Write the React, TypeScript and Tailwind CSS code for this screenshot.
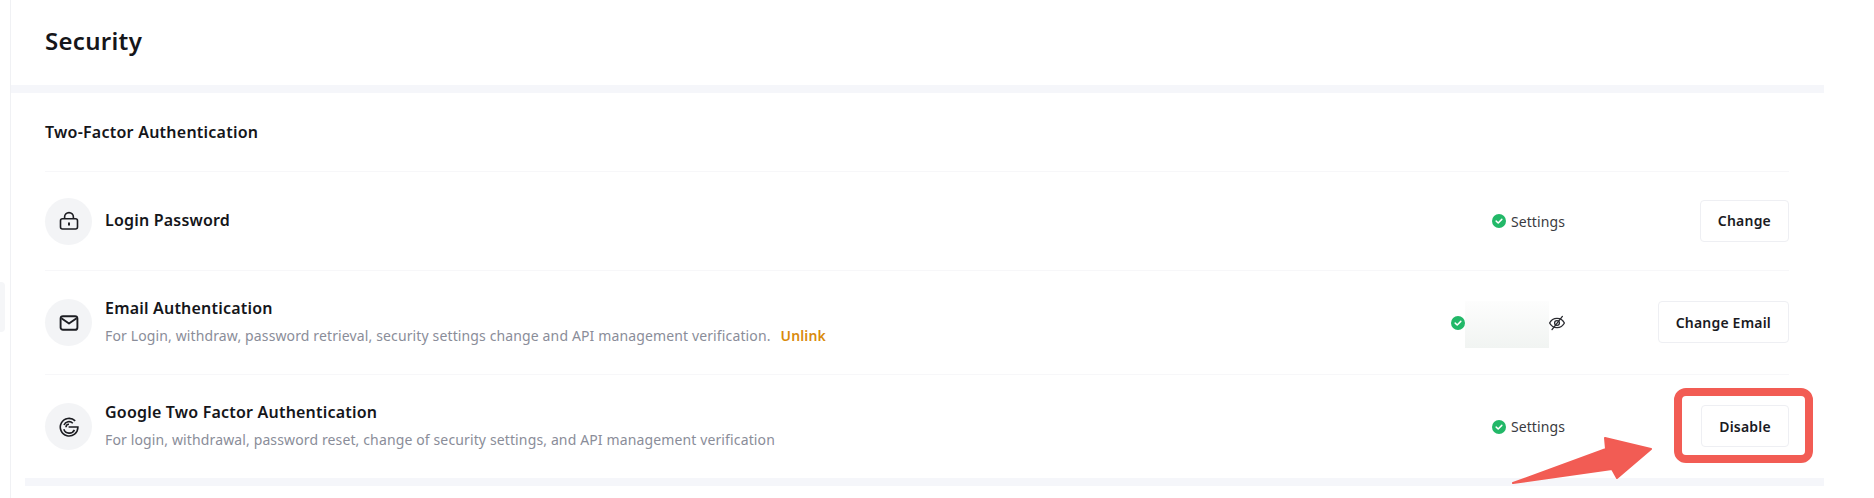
import { ReactNode } from 'react';

function CheckBadge() {
  return (
    <svg width="14" height="14" viewBox="0 0 14 14" className="shrink-0">
      <circle cx="7" cy="7" r="7" fill="#22b868" />
      <path d="M4.2 7.1l2 1.9 3.6-3.6" fill="none" stroke="#fff" strokeWidth="1.5" strokeLinecap="round" strokeLinejoin="round" />
    </svg>
  );
}

function LockIcon() {
  return (
    <svg width="20" height="20" viewBox="0 0 20 20" fill="none" stroke="#1c1d22" strokeWidth="1.6">
      <rect x="1.500" y="7.800" width="17" height="10.200" rx="2" />
      <path d="M5.600 7.800V6a4.400 4.400 0 0 1 8.800 0v1.800" />
      <path d="M10 12.200v1.600" strokeLinecap="round" strokeWidth="2" />
    </svg>
  );
}

function MailIcon() {
  return (
    <svg width="20" height="20" viewBox="0 0 20 20" fill="none" stroke="#1c1d22" strokeWidth="1.900">
      <rect x="1.600" y="3.200" width="16.800" height="13.600" rx="2.400" />
      <path d="M2.400 5.200L10 10.600l7.600-5.400" strokeLinejoin="round" />
    </svg>
  );
}

function GoogleIcon() {
  return (
    <svg width="20" height="20" viewBox="0 0 20 20" fill="none" stroke="#1c1d22" strokeWidth="1.600">
      <path d="M16.200 3.800A8.800 8.800 0 1 0 18.900 10H9.600" />
      <path d="M13.800 6.200A5.400 5.400 0 0 0 5 8" />
      <path d="M4.800 12.200A5.700 5.700 0 0 0 15.400 12.800" />
      <path d="M7 10.200a3 3 0 0 1 3-3" />
    </svg>
  );
}

function EyeSlash() {
  return (
    <svg width="16" height="16" viewBox="0 0 16 16" fill="none" stroke="#2b2c31" strokeWidth="1.300" className="shrink-0">
      <path d="M.6 8c1.600-3.100 4.100-4.600 7.400-4.600s5.800 1.500 7.400 4.600c-1.600 3.100-4.100 4.600-7.400 4.600S2.200 11.100.6 8z" />
      <circle cx="8" cy="8" r="2.400" />
      <path d="M13.400 1.400L3 14.600" strokeLinecap="round" />
    </svg>
  );
}

function Row({ icon, title, desc, status, action, short }: { icon: ReactNode; title: string; desc?: ReactNode; status: ReactNode; action: string; short?: boolean }) {
  return (
    <div className={short ? 'flex h-[99px] items-center border-t border-[#f7f7f9]' : 'flex h-[104px] items-center border-t border-[#f7f7f9]'}>
      <div className="flex h-[47px] w-[47px] shrink-0 items-center justify-center rounded-full bg-[#f3f4f6]">{icon}</div>
      <div className="ml-[13px] flex-1 pb-[3px]">
        <div className="text-[16px] font-semibold leading-[24px] tracking-[0.2px] text-[#15161a]">{title}</div>
        {desc && <div className="mt-[6px] text-[14px] leading-[20px] tracking-[0.13px] text-[#8a8d99]">{desc}</div>}
      </div>
      {status}
      <div className="mb-[1px] flex w-[224px] justify-end">
        <button className="h-[42px] min-w-[88px] rounded border border-[#eeeff3] bg-white px-[17px] text-[14px] font-semibold tracking-[0.2px] text-[#1a1b1f]">{action}</button>
      </div>
    </div>
  );
}

function Settings() {
  return (
    <div className="flex items-center gap-[5px] text-[14px] tracking-[0.1px] text-[#3a3b41]">
      <CheckBadge />
      <span>Settings</span>
    </div>
  );
}

export default function App() {
  return (
    <div className="relative flex h-[498px] w-[1874px] overflow-hidden bg-white font-['Noto_Sans',sans-serif]">
      {/* sidebar edge */}
      <div className="w-[10px] shrink-0 pt-[282px]">
        <div className="h-[50px] w-[5px] rounded-r bg-[#f5f6f8]" />
      </div>

      <div className="w-[1814px] border-l border-[#f0f1f4]">
        <div className="flex h-[85px] items-center pb-[3px] pl-[34px]">
          <h1 className="text-[24px] font-semibold tracking-[0.3px] text-[#15161a]">Security</h1>
        </div>
        <div className="h-[8px] bg-[#f5f6fa]" />

        <div className="pl-[34px] pr-[35px]">
          <div className="flex h-[78px] items-center text-[16px] font-semibold tracking-[0.24px] text-[#15161a]">Two-Factor Authentication</div>
          <Row short icon={<LockIcon />} title="Login Password" status={<Settings />} action="Change" />
          <Row
            icon={<MailIcon />}
            title="Email Authentication"
            desc={
              <>
                For Login, withdraw, password retrieval, security settings change and API management verification.
                <span className="ml-[10px] font-semibold text-[#d98a0a]">Unlink</span>
              </>
            }
            status={
              <div className="flex items-center">
                <CheckBadge />
                <div className="mt-[4px] h-[47px] w-[84px] bg-gradient-to-b from-[#fdfdfd] to-[#f1f4f2]" />
                <EyeSlash />
              </div>
            }
            action="Change Email"
          />
          <Row
            icon={<GoogleIcon />}
            title="Google Two Factor Authentication"
            desc="For login, withdrawal, password reset, change of security settings, and API management verification"
            status={<Settings />}
            action="Disable"
          />
        </div>
        <div className="ml-[14px] h-[8px] bg-[#f5f6fa]" />
      </div>

      {/* annotation */}
      <div className="absolute left-[1674px] top-[388px] h-[75px] w-[139px] rounded-[12px] border-[8px] border-[#f25c54]" />
      <svg className="absolute left-0 top-0" width="1874" height="498" fill="#f25c54" stroke="#f25c54" strokeWidth="2" strokeLinejoin="round">
        <polygon points="1513,483 1606,449 1605,438 1651,449 1617,478 1612,469" />
      </svg>
    </div>
  );
}
